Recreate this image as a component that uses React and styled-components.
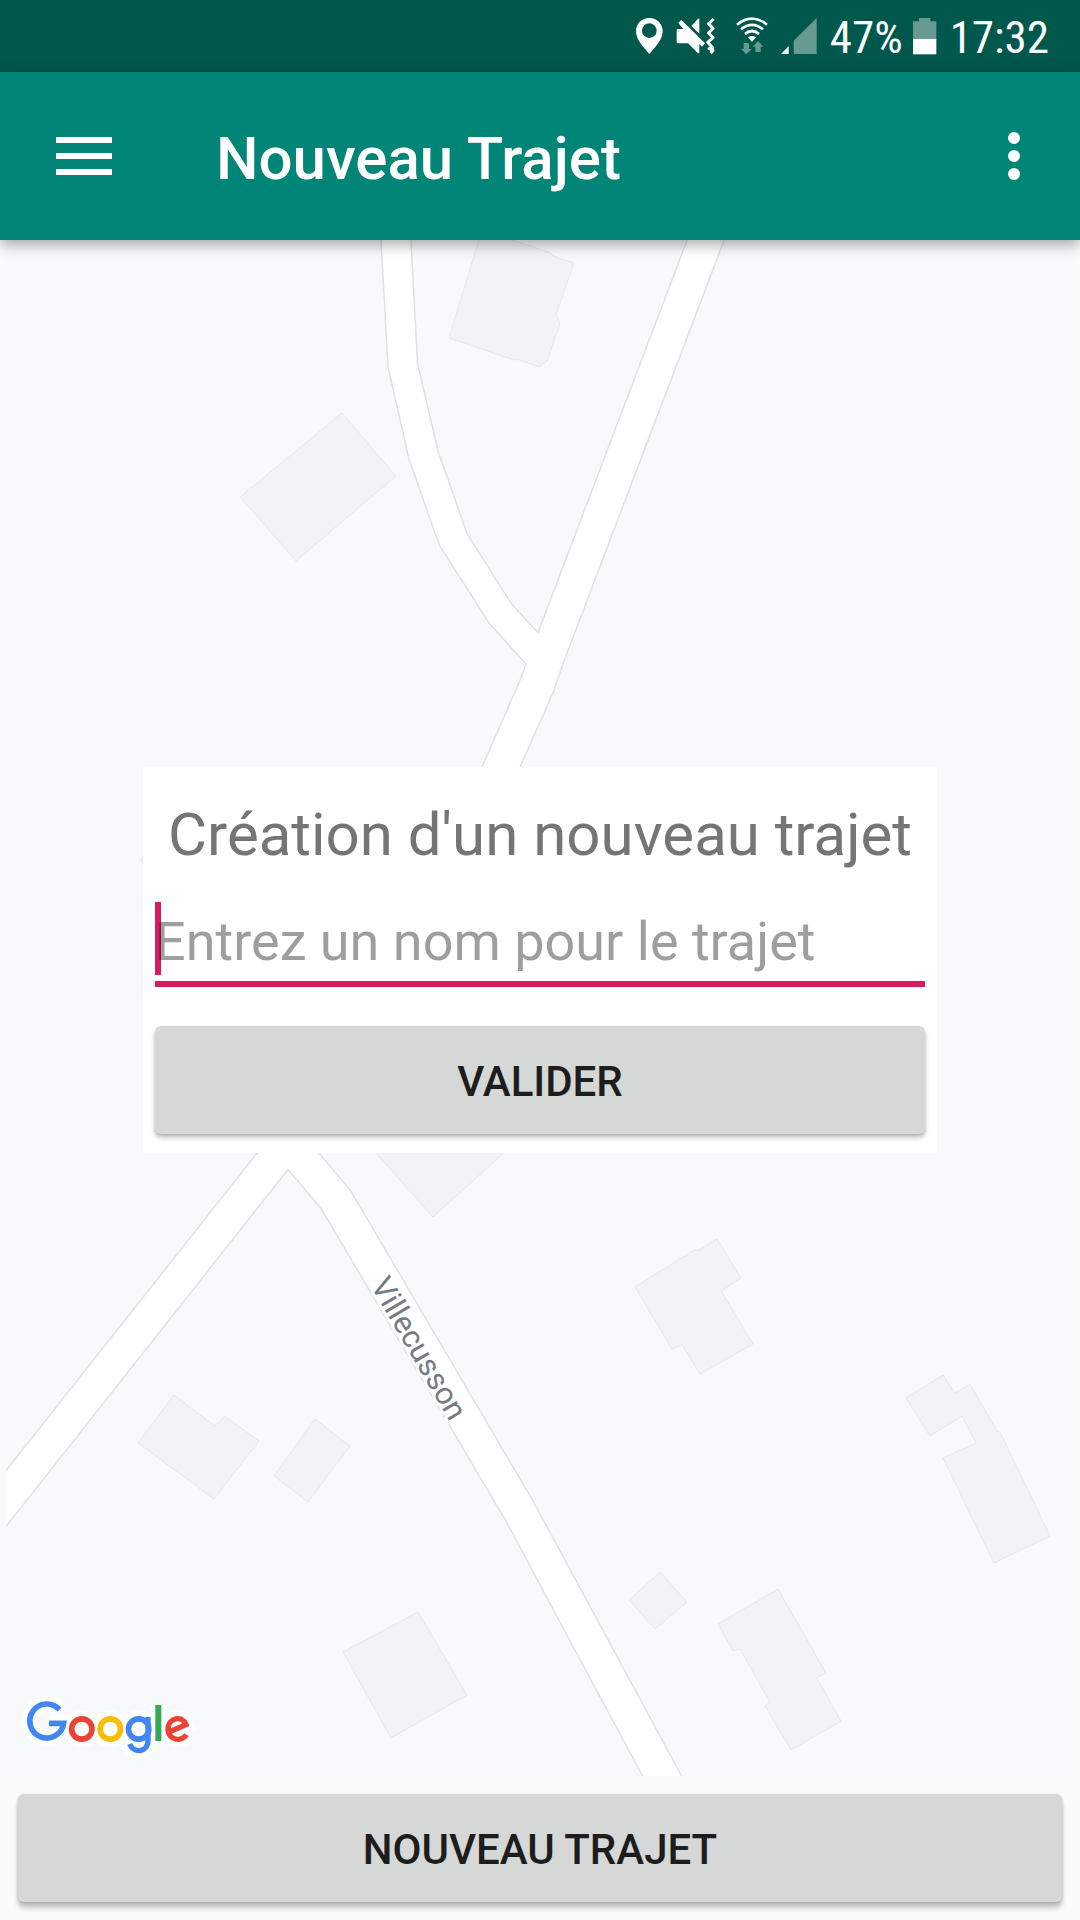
import React, { useState } from "react";
import styled, { createGlobalStyle } from "styled-components";

const GlobalStyle = createGlobalStyle`
  *, *::before, *::after { box-sizing: border-box; }
  body {
    margin: 0;
    background: #fafafa;
    font-family: Roboto, "Noto Sans", sans-serif;
  }
`;

const Screen = styled.div`
  display: flex;
  flex-direction: column;
  height: 100vh;
`;

const StatusBar = styled.div`
  flex: none;
  display: flex;
  align-items: center;
  justify-content: flex-end;
  gap: 13px;
  height: 72px;
  padding-right: 34px;
  background: #00574b;
  color: #fff;
`;

const StatusText = styled.span`
  margin-right: -3px;
  padding-top: 4px;
  font-family: "Roboto Condensed", Roboto, sans-serif;
  font-size: 45px;
  line-height: 72px;
`;

const StatusIcon = styled.svg`
  display: block;
  flex: none;
  height: 38px;
`;

const Toolbar = styled.header`
  position: relative;
  z-index: 1;
  flex: none;
  display: flex;
  align-items: center;
  height: 168px;
  background: #008577;
  color: #fff;
  box-shadow: 0 4px 14px rgba(0, 0, 0, 0.36);
`;

const IconButton = styled.button`
  display: grid;
  place-items: center;
  width: ${(p) => p.$width}px;
  height: 168px;
  padding: 0;
  border: 0;
  background: none;
  color: inherit;
`;

const ToolbarTitle = styled.h1`
  flex: 1;
  margin: 0;
  padding: 6px 0 0 48px;
  font-size: 60px;
  line-height: 72px;
  font-weight: 500;
`;

const MapArea = styled.main`
  flex: 1;
  min-height: 0;
  display: grid;
  grid-template: minmax(0, 1fr) / minmax(0, 1fr);
  margin: 0 6px;
  background: #f8f9fb;
`;

const MapDrawing = styled.svg`
  grid-area: 1 / 1;
  display: block;
  width: 100%;
  height: 100%;
`;

const LogoLink = styled.a`
  grid-area: 1 / 1;
  align-self: end;
  justify-self: start;
  padding: 0 0 14px 15px;

  svg { display: block; }
`;

const Footer = styled.footer`
  flex: none;
  display: flex;
  padding: 18px;
`;

const RaisedButton = styled.button`
  width: 100%;
  height: 108px;
  padding: 3px 0 0;
  border: 0;
  border-radius: 6px;
  background: #d6d8d7;
  box-shadow: 0 ${(p) => p.$depth}px 5px rgba(0, 0, 0, 0.22), 0 1px 3px rgba(0, 0, 0, 0.16);
  color: #1d1d1d;
  font: 500 42px/48px Roboto, "Noto Sans", sans-serif;
  text-transform: uppercase;
`;

const Overlay = styled.div`
  position: fixed;
  inset: 0;
  z-index: 2;
  display: grid;
  place-items: center;
`;

const Dialog = styled.form`
  padding: 32px 12px 19px;
  background: #fff;
`;

const DialogTitle = styled.label`
  display: block;
  margin-bottom: 31px;
  padding: 0 13px;
  color: #757575;
  font-size: 60px;
  line-height: 72px;
  text-align: center;
`;

const Field = styled.div`
  position: relative;
  margin-bottom: 39px;
`;

const Caret = styled.span`
  position: absolute;
  top: 0;
  left: 0;
  width: 6px;
  height: 73px;
  background: #d81b60;
`;

const NameInput = styled.input`
  position: relative;
  display: block;
  width: 100%;
  height: 85px;
  padding: 0;
  border: 0;
  border-bottom: 6px solid #d81b60;
  border-radius: 0;
  outline: 0;
  background: transparent;
  color: #212121;
  caret-color: #d81b60;
  font: 400 54px Roboto, "Noto Sans", sans-serif;

  &::placeholder {
    color: rgba(0, 0, 0, 0.38);
    opacity: 1;
  }
`;

const StreetName = styled.text`
  font: 400 31px Roboto, "Noto Sans", sans-serif;
  fill: #757b80;
  stroke: #fff;
  stroke-width: 6px;
  stroke-linejoin: round;
  paint-order: stroke;
`;

const buildings = [
  "480,236 500,236 551,253 553,256 574,263 556,315 560,324 547,361 539,367 517,359 514,360 449,338",
  "342,413 396,476 296,561 240,497",
  "140,860 160,836 180,860 160,884",
  "375,1152 433,1217 505,1152 440,1100",
  "717,1239 741,1278 721,1291 753,1344 700,1374 682,1345 672,1349 635,1287 694,1250 699,1250",
  "174,1395 215,1426 225,1416 259,1441 214,1499 138,1443",
  "315,1419 350,1446 308,1502 274,1476",
  "943,1375 955,1393 970,1384 997,1431 1000,1432 1050,1536 994,1563 943,1458 976,1443 962,1416 930,1436 906,1398",
  "660,1572 687,1602 655,1629 629,1600",
  "778,1589 826,1673 817,1678 841,1721 791,1750 765,1706 770,1702 740,1649 733,1651 718,1624",
  "418,1612 467,1695 391,1738 343,1652",
];

function StreetMap() {
  return (
    <MapDrawing viewBox="6 240 1068 1536" preserveAspectRatio="xMidYMid slice">
      <g fill="#f1f3f4" stroke="#e6e8ea">
        {buildings.map((points) => (
          <polygon key={points} points={points} />
        ))}
      </g>
      <path
        fill="#fff"
        stroke="#dfe1e3"
        strokeWidth="1.5"
        d="M380.6 230L381 240L388 367L409 459L439.500 545.500L489 623L526 664L521 678L482 767L258 1152L0 1478V1534L288 1169.500L321 1208.500L506 1521L577 1654L648 1786H687L532.500 1500L350.500 1190.500L318 1152L520 767L554 690.500L561 669L728 230H691L538 632.500L511.500 604L467 533.500L438 451L417.500 363L411 240V230Z"
      />
      <StreetName transform="translate(370 1285) rotate(59.8)">Villecusson</StreetName>
    </MapDrawing>
  );
}

function LogoShapes({ grow }) {
  const pen = (color, width) => ({
    fill: "none",
    stroke: grow ? "#fcfefd" : color,
    strokeWidth: width + (grow || 0),
  });
  return (
    <g>
      <path {...pen("#4285f4", 17)} d="M175.500 146A51 51 0 1 0 188 187H144" />
      <circle {...pen("#ea4335", 17)} cx="242.500" cy="204" r="30.500" />
      <circle {...pen("#fbbc05", 17)} cx="328" cy="204" r="30.500" />
      <circle {...pen("#4285f4", 17)} cx="413" cy="204" r="30.500" />
      <path {...pen("#4285f4", 16)} d="M441 168V238C441 276 397 278 386 249" />
      <path {...pen("#34a853", 18)} d="M472 132V240" />
      <path {...pen("#ea4335", 16)} d="M504 213L555 191C545 163 501 168 501 205C501 238 543 244 556 221" />
    </g>
  );
}

function GoogleLogo() {
  return (
    <svg width="180" height="66" viewBox="60 105 540 198" role="img" aria-label="Google">
      <LogoShapes grow={34} />
      <LogoShapes />
    </svg>
  );
}

function StatusIcons() {
  return (
    <>
      <StatusIcon width="27" viewBox="110 51 81 114" aria-hidden="true">
        <path fill="#fff" fillRule="evenodd" d="M150 54C127 54 110 71 110 94C110 119 133 143 150 162C167 143 190 119 190 94C190 71 173 54 150 54ZM150 70A22 22 0 1 1 150 114A22 22 0 1 1 150 70Z" />
      </StatusIcon>
      <StatusIcon width="39" viewBox="232 51 117 114" aria-hidden="true">
        <path fill="#fff" d="M238 87H254L239 69L248 59L319 130L310 140L302 132V160H298L268 130H238Q234 130 234 126V91Q234 87 238 87ZM298 56H302V101L278 78Z" />
        <path fill="none" stroke="#fff" strokeWidth="9" d="M345 57L330 71L343 85L330 99L343 113L327 127L342 143L331 146L343 151L336 160" strokeLinejoin="round" />
      </StatusIcon>
      <StatusIcon width="40" viewBox="391 51 120 114" aria-hidden="true">
        <g fill="none" stroke="#fff" strokeWidth="8">
          <path d="M418 74Q463 38 508 74" />
          <path d="M430 88Q463 61 496 88" />
          <path d="M442 102Q463 84 484 102" />
        </g>
        <path fill="#fff" d="M451 112Q463 104 475 112L463 126Z" />
        <path fill="#669a93" d="M438 129H454V147H462L446 163L430 147H438ZM473 156V140H465L481 123L497 140H489V156Z" />
      </StatusIcon>
      <StatusIcon width="36" viewBox="550 51 108 114" aria-hidden="true">
        <path fill="#fff" d="M573 138V162H550Z" />
        <path fill="#669a93" d="M657 54V162H588V122Z" />
      </StatusIcon>
    </>
  );
}

export default function App() {
  const [name, setName] = useState("");
  return (
    <Screen>
      <GlobalStyle />
      <StatusBar>
        <StatusIcons />
        <StatusText>47%</StatusText>
        <StatusIcon width="24" viewBox="942 51 72 114" aria-hidden="true">
          <path fill="#669a93" d="M942 117V64H960V54H994V64H1012V117Z" />
          <path fill="#fff" d="M942 117H1012V163H942Z" />
        </StatusIcon>
        <StatusText>17:32</StatusText>
      </StatusBar>
      <Toolbar>
        <IconButton $width={168} type="button" aria-label="Menu">
          <svg width="56" height="38" viewBox="0 0 56 38" fill="currentColor">
            <path d="M0 0H56V6H0ZM0 16H56V22H0ZM0 32H56V38H0Z" />
          </svg>
        </IconButton>
        <ToolbarTitle>Nouveau Trajet</ToolbarTitle>
        <IconButton $width={132} type="button" aria-label="Options">
          <svg width="12" height="48" viewBox="0 0 12 48" fill="currentColor">
            <circle cx="6" cy="6" r="6" />
            <circle cx="6" cy="24" r="6" />
            <circle cx="6" cy="42" r="6" />
          </svg>
        </IconButton>
      </Toolbar>
      <MapArea>
        <StreetMap />
        <LogoLink href="#google" aria-label="Google">
          <GoogleLogo />
        </LogoLink>
      </MapArea>
      <Footer>
        <RaisedButton $depth={6} type="button">Nouveau Trajet</RaisedButton>
      </Footer>
      <Overlay>
        <Dialog onSubmit={(event) => event.preventDefault()}>
          <DialogTitle htmlFor="trip-name">Création d'un nouveau trajet</DialogTitle>
          <Field>
            <Caret />
            <NameInput
              id="trip-name"
              type="text"
              placeholder="Entrez un nom pour le trajet"
              value={name}
              onChange={(event) => setName(event.target.value)}
            />
          </Field>
          <RaisedButton $depth={4} type="submit">Valider</RaisedButton>
        </Dialog>
      </Overlay>
    </Screen>
  );
}
